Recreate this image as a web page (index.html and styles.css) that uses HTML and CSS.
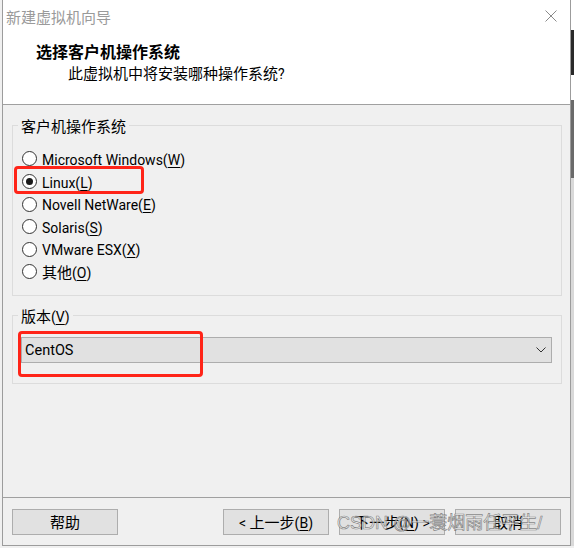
FILE: index.html
```html
<!DOCTYPE html>
<html lang="zh-CN">
<head>
<meta charset="utf-8">
<title>新建虚拟机向导</title>
<link rel="stylesheet" href="styles.css">
</head>
<body>
<div class="window">
  <div class="header">
    <div class="titlebar">
      <span class="title">新建虚拟机向导</span>
      <svg class="close" width="12" height="12" viewBox="0 0 12 12"><path d="M0.5 0.5 L11.5 11.5 M11.5 0.5 L0.5 11.5" stroke="#8a8a8a" stroke-width="1" fill="none"/></svg>
    </div>
    <div class="heading">选择客户机操作系统</div>
    <div class="subtitle">此虚拟机中将安装哪种操作系统<span class="lat">?</span></div>
  </div>
  <div class="main">
    <fieldset class="group">
      <legend>客户机操作系统</legend>
      <div class="radios">
        <div class="radio"><span class="circle"></span><span class="lat">Microsoft Windows(<u>W</u>)</span></div>
        <div class="radio"><span class="circle checked"></span><span class="lat">Linux(<u>L</u>)</span></div>
        <div class="radio"><span class="circle"></span><span class="lat">Novell NetWare(<u>E</u>)</span></div>
        <div class="radio"><span class="circle"></span><span class="lat">Solaris(<u>S</u>)</span></div>
        <div class="radio"><span class="circle"></span><span class="lat">VMware ESX(<u>X</u>)</span></div>
        <div class="radio"><span class="circle"></span><span class="cjk">其他</span><span class="lat">(<u>O</u>)</span></div>
      </div>
    </fieldset>
    <fieldset class="group group-ver">
      <legend>版本<span class="lat">(<u>V</u>)</span></legend>
      <div class="ver-body">
        <div class="select">
          <span class="lat">CentOS</span>
          <svg class="chev" width="10" height="6" viewBox="0 0 10 6"><path d="M0.5 0.5 L5 5 L9.5 0.5" stroke="#333" stroke-width="1" fill="none"/></svg>
        </div>
      </div>
    </fieldset>
  </div>
  <div class="footer">
    <button class="btn">帮助</button>
    <div class="spacer"></div>
    <button class="btn"><span class="lat">&lt; </span>上一步<span class="lat">(<u>B</u>)</span></button>
    <button class="btn">下一步<span class="lat">(<u>N</u>) &gt;</span></button>
    <button class="btn">取消</button>
  </div>
  <div class="mark mark-linux"></div>
  <div class="mark mark-centos"></div>
  <div class="watermark">CSDN @一蓑烟雨任平生/</div>
</div>
</body>
</html>
```

FILE: styles.css
```css
html, body {
  margin: 0;
  padding: 0;
}
body {
  width: 574px;
  height: 548px;
  overflow: hidden;
  background:
    linear-gradient(to bottom, #ffffff 0 30px, #2a2a2a 30px 75px, #ffffff 75px 100px, #6a6a6a 100px 178px, #d9d9d9 178px 546px, #f0f0f0 546px) right top / 3px 100% no-repeat,
    #f0f0f0;
  font-family: "Noto Sans CJK SC", "Microsoft YaHei", sans-serif;
  font-size: 15px;
  color: #000;
}
.lat {
  font-family: Roboto, "Noto Sans CJK SC", sans-serif;
  font-size: 14px;
}
.window {
  position: relative;
  box-sizing: border-box;
  margin-left: 2px;
  width: 569px;
  height: 546px;
  border: 1px solid #9c9c9c;
  border-top: none;
  background: #f0f0f0;
  display: flex;
  flex-direction: column;
}
.header {
  height: 104px;
  background: #fff;
  border-bottom: 1px solid #a0a0a0;
  flex: none;
}
.titlebar {
  height: 34px;
  display: flex;
  align-items: center;
  justify-content: space-between;
  padding: 0 13px 0 3px;
}
.title {
  color: #9a9a9a;
  font-size: 15px;
  line-height: 34px;
}
.close {
  display: block;
  margin-top: -2px;
}
.heading {
  margin-top: 6px;
  padding-left: 33px;
  font-size: 16px;
  font-weight: bold;
  line-height: 22px;
}
.subtitle {
  padding-left: 65px;
  font-size: 15px;
  line-height: 22px;
}
.main {
  flex: 1;
  display: flex;
  flex-direction: column;
}
.group {
  margin: 10px 8px 0 9px;
  padding: 0;
  border: 1px solid #dcdcdc;
  min-width: 0;
}
.group legend {
  margin-left: 5px;
  padding: 0 3px;
  line-height: 21px;
  height: 21px;
  font-size: 15px;
}
.radios {
  padding: 11.7px 8px 11.7px 9px;
}
.radio {
  height: 22.6px;
  display: flex;
  align-items: center;
  line-height: 20px;
  white-space: nowrap;
}
.radio .lat {
  padding-top: 2px;
}
.circle {
  box-sizing: border-box;
  width: 15px;
  height: 15px;
  border: 1px solid #333;
  border-radius: 50%;
  background: #fff;
  margin-right: 5px;
  display: flex;
  align-items: center;
  justify-content: center;
  flex: none;
}
.circle.checked::after {
  content: "";
  width: 7px;
  height: 7px;
  border-radius: 50%;
  background: #1a1a1a;
}
u {
  text-decoration: underline;
  text-underline-offset: 2px;
  text-decoration-thickness: 1px;
}
.group-ver {
  margin-top: 9px;
}
.ver-body {
  padding: 11px 9px 20px 8px;
}
.select {
  box-sizing: border-box;
  height: 26px;
  border: 1px solid #adadad;
  background: #e1e1e1;
  display: flex;
  align-items: center;
  justify-content: space-between;
  padding: 0 5px 0 3px;
  line-height: 20px;
}
.select .lat {
  font-size: 14.5px;
  padding-top: 3px;
}
.chev {
  display: block;
}
.footer {
  flex: none;
  box-sizing: border-box;
  height: 48px;
  border-top: 1px solid #a0a0a0;
  display: flex;
  align-items: flex-start;
  gap: 10px;
  padding: 11px 9px 0 9px;
}
.spacer {
  flex: 1;
}
.btn {
  box-sizing: border-box;
  width: 106px;
  height: 26px;
  border: 1px solid #adadad;
  background: #e1e1e1;
  font-family: inherit;
  font-size: 15px;
  line-height: 22px;
  padding: 0;
  color: #000;
}
.mark {
  position: absolute;
  box-sizing: border-box;
  border: 3px solid #ff2418;
  border-radius: 4px;
}
.mark-linux {
  left: 11px;
  top: 166px;
  width: 130px;
  height: 28px;
}
.mark-centos {
  left: 15px;
  top: 331px;
  width: 185px;
  height: 46px;
}
.watermark {
  position: absolute;
  left: 334px;
  top: 512px;
  font-family: "Liberation Sans", "Noto Sans CJK SC", sans-serif;
  font-size: 18px;
  line-height: 22px;
  white-space: nowrap;
  color: rgba(255, 255, 255, 0.6);
  -webkit-text-stroke: 0.7px rgba(100, 100, 100, 0.75);
}
```
